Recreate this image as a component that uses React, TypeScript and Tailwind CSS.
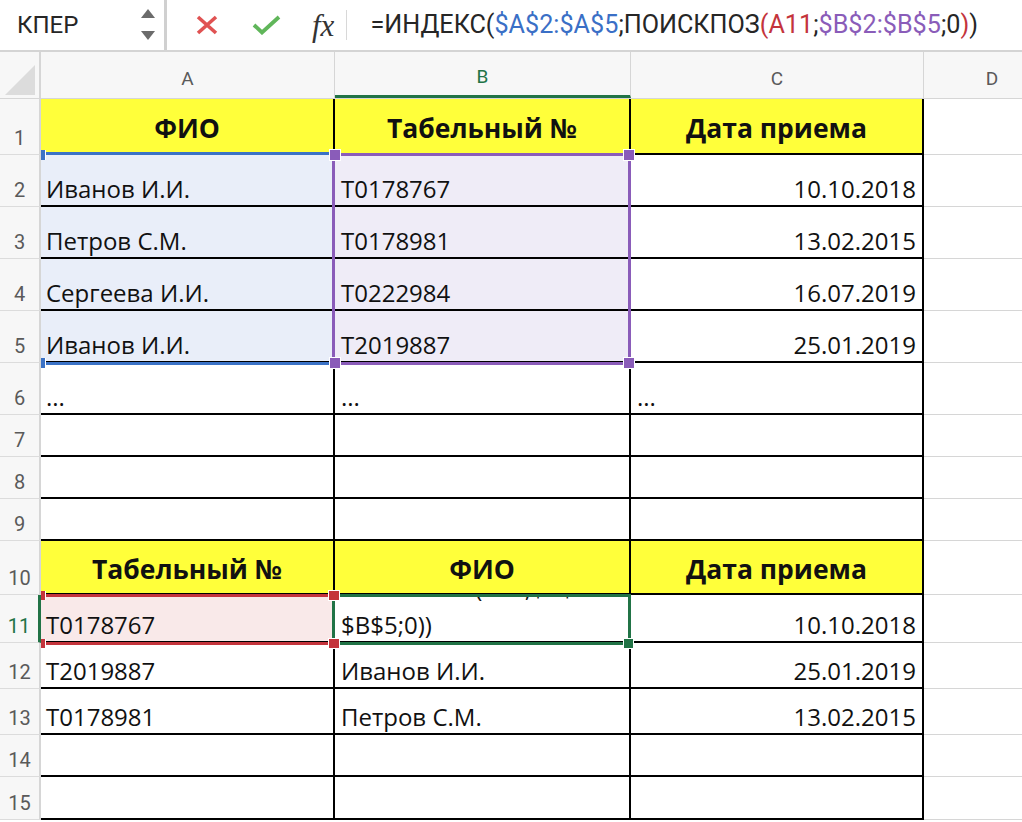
import React from "react";

type RowDef = {
  n: number;
  h: string;
  a?: string;
  b?: React.ReactNode;
  c?: string;
  head?: boolean;
  cLeft?: boolean;
  aBg?: string;
  bBg?: string;
  active?: boolean;
};

const rows: RowDef[] = [
  { n: 1, h: "h-[56px]", a: "ФИО", b: "Табельный №", c: "Дата приема", head: true },
  { n: 2, h: "h-[52px]", a: "Иванов И.И.", b: "T0178767", c: "10.10.2018", aBg: "bg-[#e9eef9]", bBg: "bg-[#efecf7]" },
  { n: 3, h: "h-[52px]", a: "Петров С.М.", b: "T0178981", c: "13.02.2015", aBg: "bg-[#e9eef9]", bBg: "bg-[#efecf7]" },
  { n: 4, h: "h-[52px]", a: "Сергеева И.И.", b: "T0222984", c: "16.07.2019", aBg: "bg-[#e9eef9]", bBg: "bg-[#efecf7]" },
  { n: 5, h: "h-[52px]", a: "Иванов И.И.", b: "T2019887", c: "25.01.2019", aBg: "bg-[#e9eef9]", bBg: "bg-[#efecf7]" },
  { n: 6, h: "h-[52px]", a: "...", b: "...", c: "...", cLeft: true },
  { n: 7, h: "h-[42px]" },
  { n: 8, h: "h-[42px]" },
  { n: 9, h: "h-[42px]" },
  { n: 10, h: "h-[54px]", a: "Табельный №", b: "ФИО", c: "Дата приема", head: true },
  {
    n: 11,
    h: "h-[48px]",
    a: "T0178767",
    b: (
      <div className="flex flex-col justify-end h-full overflow-hidden">
        <div className="leading-[44px] whitespace-nowrap">ПОИСКПОЗ(A11;$B$2:</div>
        <div className="leading-[30px] whitespace-nowrap">$B$5;0))</div>
      </div>
    ),
    c: "10.10.2018",
    aBg: "bg-[#f9e9e9]",
    active: true,
  },
  { n: 12, h: "h-[46px]", a: "T2019887", b: "Иванов И.И.", c: "25.01.2019" },
  { n: 13, h: "h-[46px]", a: "T0178981", b: "Петров С.М.", c: "13.02.2015" },
  { n: 14, h: "h-[42px]" },
  { n: 15, h: "h-[43px]" },
];

function FormulaBar() {
  return (
    <div className="h-[52px] flex border-b-2 border-[#d4d4d4] bg-white font-['Roboto'] text-[#262626]">
      <div className="w-[164px] flex items-center justify-between pl-[17px] pr-[9px] text-[24px]">
        <span>КПЕР</span>
        <svg width="14" height="32" viewBox="0 0 14 32">
          <polygon points="7,0 14,9 0,9" fill="#6b6b6b" />
          <polygon points="0,22 14,22 7,31" fill="#6b6b6b" />
        </svg>
      </div>
      <div className="w-[3px] bg-[#d0d0d0]" />
      <div className="flex items-center pl-[29px]">
        <svg width="22" height="20" viewBox="0 0 22 20">
          <path d="M2 2 L20 18 M20 2 L2 18" stroke="#e05252" strokeWidth="3.6" />
        </svg>
        <svg width="29" height="20" viewBox="0 0 29 20" className="ml-[34px]">
          <path d="M2 10 L10 17.5 L27 2" stroke="#60b65a" strokeWidth="3.8" fill="none" />
        </svg>
        <span className="ml-[31px] font-['Liberation_Serif'] italic text-[31px] text-[#333] leading-none">fx</span>
      </div>
      <div className="ml-[12px] my-[10px] w-px bg-[#d8d8d8]" />
      <div className="pl-[23px] flex items-center text-[25.2px] whitespace-nowrap">
        <span>=ИНДЕКС(</span>
        <span className="text-[#3a6fc6]">$A$2:$A$5</span>
        <span>;ПОИСКПОЗ</span>
        <span className="text-[#c4343c]">(A11</span>
        <span>;</span>
        <span className="text-[#8a5cb9]">$B$2:$B$5</span>
        <span>;0</span>
        <span className="text-[#c4343c]">)</span>
        <span>)</span>
      </div>
    </div>
  );
}

function HeaderRow() {
  return (
    <div className="flex h-[47px] bg-[#f7f7f7] border-b border-[#d6d6d6] font-['Roboto'] text-[19px] text-[#5a5a5a]">
      <div className="w-[41px] shrink-0 border-r-2 border-[#d6d6d6] relative">
        <svg width="30" height="30" viewBox="0 0 30 30" className="absolute right-[4px] bottom-[3px]">
          <polygon points="30,0 30,30 0,30" fill="#dcdcdc" />
        </svg>
      </div>
      <div className="w-[294px] shrink-0 flex items-center justify-center pt-[8px] border-r border-[#d6d6d6]">A</div>
      <div className="w-[296px] shrink-0 flex items-center justify-center pt-[8px] border-b-[3px] border-b-[#217346] text-[#217346] border-r border-r-[#d6d6d6]">
        B
      </div>
      <div className="w-[293px] shrink-0 flex items-center justify-center pt-[8px] border-r border-[#d6d6d6]">C</div>
      <div className="w-[136px] shrink-0 flex items-center justify-center pt-[8px]">D</div>
    </div>
  );
}

function Row({ r }: { r: RowDef }) {
  const cell = "shrink-0 border-r-2 border-b-2 border-black flex text-[24px] leading-[30px] text-[#111]";
  const head = "bg-[#ffff3a] items-center justify-center pt-[3px] font-bold text-[26.5px]";
  return (
    <div className={`flex ${r.h}`}>
      <div
        className={`w-[41px] shrink-0 bg-[#f7f7f7] border-b border-b-[#dcdcdc] flex items-end justify-center pb-[1px] font-['Roboto'] text-[20px] ${
          r.active ? "border-r-[3px] border-r-[#217346] text-[#217346]" : "border-r-2 border-r-[#d6d6d6] text-[#5a5a5a]"
        }`}
      >
        {r.n}
      </div>
      {r.head ? (
        <>
          <div className={`${cell} w-[294px] ${head}`}>{r.a}</div>
          <div className={`${cell} w-[296px] ${head}`}>{r.b}</div>
          <div className={`${cell} w-[293px] ${head}`}>{r.c}</div>
        </>
      ) : (
        <>
          <div className={`${cell} w-[294px] items-end pl-[5px] pb-[1px] ${r.aBg ?? ""}`}>{r.a}</div>
          <div className={`${cell} w-[296px] items-end pl-[6px] ${r.active ? "" : "pb-[1px]"} ${r.bBg ?? ""}`}>
            {r.active ? <div className="h-full w-full pb-[1px]">{r.b}</div> : r.b}
          </div>
          <div className={`${cell} w-[293px] items-end pb-[1px] ${r.cLeft ? "pl-[6px]" : "justify-end pr-[6px]"}`}>{r.c}</div>
        </>
      )}
      <div className="w-[136px] shrink-0 border-b border-[#d6d6d6]" />
    </div>
  );
}

export default function App() {
  return (
    <div className="relative w-[1022px] h-[822px] overflow-hidden bg-white font-['Open_Sans',sans-serif]">
      <FormulaBar />
      <div className="w-[1060px]">
        <HeaderRow />
        {rows.map((r) => (
          <Row key={r.n} r={r} />
        ))}
      </div>

      {/* blue range A2:A5 */}
      <div className="absolute left-[43px] top-[152px] w-[290px] h-[3px] bg-[#3b72c6]" />
      <div className="absolute left-[43px] top-[362px] w-[290px] h-[3px] bg-[#3b72c6]" />
      <div className="absolute left-[41px] top-[150px] w-[5px] h-[10px] bg-[#3b72c6] border-r border-white" />
      <div className="absolute left-[41px] top-[358px] w-[5px] h-[10px] bg-[#3b72c6] border-r border-white" />

      {/* purple range B2:B5 */}
      <div className="absolute left-[332px] top-[153px] w-[299px] h-[212px] border-[3px] border-[#8a5cb9]" />
      <div className="absolute left-[329px] top-[149px] w-[12px] h-[12px] bg-[#8a5cb9] border-[1.5px] border-white" />
      <div className="absolute left-[623px] top-[149px] w-[12px] h-[12px] bg-[#8a5cb9] border-[1.5px] border-white" />
      <div className="absolute left-[329px] top-[357px] w-[12px] h-[12px] bg-[#8a5cb9] border-[1.5px] border-white" />
      <div className="absolute left-[623px] top-[357px] w-[12px] h-[12px] bg-[#8a5cb9] border-[1.5px] border-white" />

      {/* active cell B11 */}
      <div className="absolute left-[332px] top-[594px] w-[299px] h-[51px] border-[3px] border-[#217346]" />
      <div className="absolute left-[623px] top-[638px] w-[11px] h-[11px] bg-[#217346] border border-white" />

      {/* red range A11 */}
      <div className="absolute left-[43px] top-[594px] w-[290px] h-[3px] bg-[#c4343c]" />
      <div className="absolute left-[43px] top-[642px] w-[290px] h-[3px] bg-[#c4343c]" />
      <div className="absolute left-[41px] top-[591px] w-[5px] h-[9px] bg-[#c4343c] border-r border-white" />
      <div className="absolute left-[41px] top-[639px] w-[5px] h-[9px] bg-[#c4343c] border-r border-white" />
      <div className="absolute left-[328px] top-[590px] w-[12px] h-[11px] bg-[#c4343c] border-[1.5px] border-white" />
      <div className="absolute left-[328px] top-[638px] w-[12px] h-[11px] bg-[#c4343c] border-[1.5px] border-white" />
    </div>
  );
}
